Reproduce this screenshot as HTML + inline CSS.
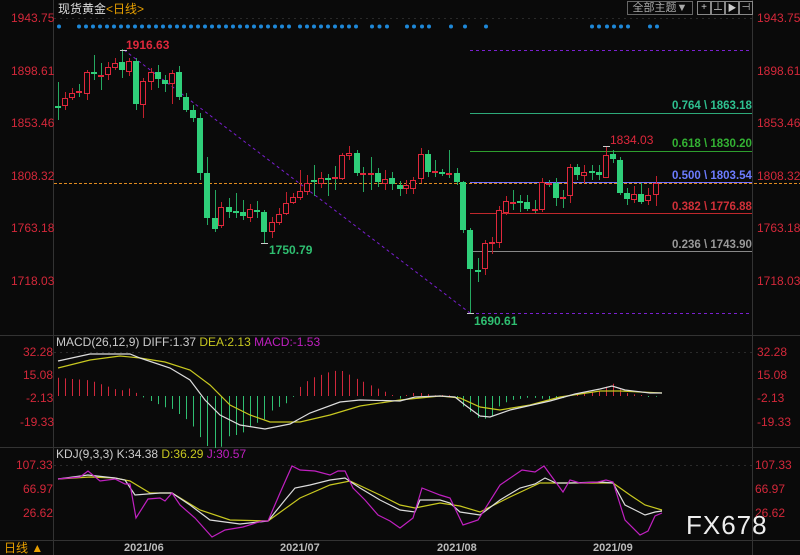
<!DOCTYPE html>
<html><head><meta charset="utf-8"><style>
html,body{margin:0;padding:0;background:#0a0a0a;}
#c{position:relative;width:800px;height:555px;overflow:hidden;background:#0a0a0a;font-family:"Liberation Sans","Noto Sans CJK SC",sans-serif;}
.t{position:absolute;white-space:nowrap;font-size:12px;line-height:12px;}
.ax{color:#d4283a;font-size:12px;}
</style></head><body><div id="c">
<svg id="s" width="800" height="555" style="position:absolute;left:0;top:0">
<line x1="53.5" y1="0" x2="53.5" y2="555" stroke="#333" />
<line x1="752.5" y1="0" x2="752.5" y2="555" stroke="#333" />
<line x1="0" y1="335.5" x2="800" y2="335.5" stroke="#333" />
<line x1="0" y1="447.5" x2="800" y2="447.5" stroke="#333" />
<line x1="0" y1="540.5" x2="800" y2="540.5" stroke="#333" />
<line x1="54" y1="18.5" x2="752" y2="18.5" stroke="#2a2a2a" stroke-dasharray="2,4"/>
<line x1="54" y1="352.5" x2="752" y2="352.5" stroke="#2a2a2a" stroke-dasharray="2,4"/>
<line x1="54" y1="465.5" x2="752" y2="465.5" stroke="#2a2a2a" stroke-dasharray="2,4"/>
<line x1="470" y1="50.5" x2="752" y2="50.5" stroke="#7a1fd0" stroke-dasharray="3,3"/>
<line x1="470" y1="113.5" x2="752" y2="113.5" stroke="#2eaa7a"/>
<line x1="470" y1="151.5" x2="752" y2="151.5" stroke="#2e9e2e"/>
<line x1="470" y1="182.5" x2="752" y2="182.5" stroke="#7070ff"/>
<line x1="470" y1="213.5" x2="752" y2="213.5" stroke="#c0282c"/>
<line x1="470" y1="251.5" x2="752" y2="251.5" stroke="#888"/>
<line x1="470" y1="313.5" x2="752" y2="313.5" stroke="#7a1fd0" stroke-dasharray="3,3"/>
<line x1="54" y1="183.5" x2="800" y2="183.5" stroke="#e08a20" stroke-dasharray="3,2"/>
<line x1="124" y1="50" x2="470" y2="313" stroke="#7a1fd0" stroke-dasharray="3,3"/>
<g id="cd"></g><g id="mc"></g><g id="dots"></g>
</svg>
<div class="t" style="left:58px;top:3px;color:#ddd;font-size:12px">现货黄金<span style="color:#e8a000">&lt;日线&gt;</span></div>
<div class="t" style="left:627px;top:1px;width:64px;height:12px;border:1px solid #666;color:#aaa;font-size:11px;text-align:center">全部主题▼</div>
<div class="t" style="left:697px;top:1px;width:12px;height:12px;border:1px solid #888;color:#ccc;font-size:10px;text-align:center">+</div>
<div class="t" style="left:711px;top:1px;width:12px;height:12px;border:1px solid #888;color:#ccc;font-size:10px;text-align:center">⊥</div>
<div class="t" style="left:725px;top:1px;width:12px;height:12px;border:1px solid #888;color:#ccc;font-size:9px;text-align:center">▶</div>
<div class="t" style="left:739px;top:1px;width:12px;height:12px;border:1px solid #888;color:#ccc;font-size:10px;text-align:center">⊣</div>
<div class="t ax" style="left:11px;top:12px">1943.75</div>
<div class="t ax" style="left:11px;top:65px">1898.61</div>
<div class="t ax" style="left:11px;top:117px">1853.46</div>
<div class="t ax" style="left:11px;top:170px">1808.32</div>
<div class="t ax" style="left:11px;top:222px">1763.18</div>
<div class="t ax" style="left:11px;top:275px">1718.03</div>
<div class="t ax" style="left:757px;top:12px">1943.75</div>
<div class="t ax" style="left:757px;top:65px">1898.61</div>
<div class="t ax" style="left:757px;top:117px">1853.46</div>
<div class="t ax" style="left:757px;top:170px">1808.32</div>
<div class="t ax" style="left:757px;top:222px">1763.18</div>
<div class="t ax" style="left:757px;top:275px">1718.03</div>
<div class="t ax" style="left:23px;top:346px">32.28</div>
<div class="t ax" style="left:23px;top:369px">15.08</div>
<div class="t ax" style="left:26px;top:392px">-2.13</div>
<div class="t ax" style="left:20px;top:416px">-19.33</div>
<div class="t ax" style="left:757px;top:346px">32.28</div>
<div class="t ax" style="left:757px;top:369px">15.08</div>
<div class="t ax" style="left:757px;top:392px">-2.13</div>
<div class="t ax" style="left:757px;top:416px">-19.33</div>
<div class="t ax" style="left:16px;top:459px">107.33</div>
<div class="t ax" style="left:23px;top:483px">66.97</div>
<div class="t ax" style="left:23px;top:507px">26.62</div>
<div class="t ax" style="left:755px;top:459px">107.33</div>
<div class="t ax" style="left:755px;top:483px">66.97</div>
<div class="t ax" style="left:755px;top:507px">26.62</div>
<div class="t" style="left:126px;top:39px;color:#e0283c;font-size:12px;font-weight:bold">1916.63</div>
<div class="t" style="left:269px;top:244px;color:#2fbf71;font-size:12px;font-weight:bold">1750.79</div>
<div class="t" style="left:610px;top:134px;color:#e0283c;font-size:12px">1834.03</div>
<div class="t" style="left:474px;top:315px;color:#2fbf71;font-size:12px;font-weight:bold">1690.61</div>
<div class="t" style="left:672px;top:100px;color:#2ec090;font-size:11.5px;font-weight:bold">0.764 \ 1863.18</div>
<div class="t" style="left:672px;top:138px;color:#33b233;font-size:11.5px;font-weight:bold">0.618 \ 1830.20</div>
<div class="t" style="left:672px;top:170px;color:#6c7cff;font-size:11.5px;font-weight:bold">0.500 \ 1803.54</div>
<div class="t" style="left:672px;top:201px;color:#d03038;font-size:11.5px;font-weight:bold">0.382 \ 1776.88</div>
<div class="t" style="left:672px;top:239px;color:#999;font-size:11.5px;font-weight:bold">0.236 \ 1743.90</div>
<div class="t" style="left:56px;top:336px;font-size:12px;color:#ccc">MACD(26,12,9) DIFF:1.37 <span style="color:#c8c820">DEA:2.13</span> <span style="color:#c020c0">MACD:-1.53</span></div>
<div class="t" style="left:56px;top:448px;font-size:12px;color:#ccc">KDJ(9,3,3) K:34.38 <span style="color:#c8c820">D:36.29</span> <span style="color:#c020c0">J:30.57</span></div>
<div class="t" style="left:4px;top:542px;color:#e8a000;font-size:12px">日线 ▲</div>
<div class="t" style="left:124px;top:542px;color:#bbb;font-size:11px;font-weight:bold">2021/06</div>
<div class="t" style="left:280px;top:542px;color:#bbb;font-size:11px;font-weight:bold">2021/07</div>
<div class="t" style="left:437px;top:542px;color:#bbb;font-size:11px;font-weight:bold">2021/08</div>
<div class="t" style="left:593px;top:542px;color:#bbb;font-size:11px;font-weight:bold">2021/09</div>
<div class="t" style="left:686px;top:512px;color:#eee;font-size:26px;line-height:26px;letter-spacing:1px">FX678</div>
<script>
var NS="http://www.w3.org/2000/svg";
function el(p,n,a){var e=document.createElementNS(NS,n);for(var k in a)e.setAttribute(k,a[k]);p.appendChild(e);return e;}
var C=[[58,106,106,82,120],[65,105,98,92,110],[72,97,93,88,100],[79,91,91,84,97],[87,93,72,70,100],[94,72,74,55,80],[101,75,75,63,90],[108,74,67,62,80],[115,67,63,58,70],[122,62,70,49,78],[129,71,61,58,76],[136,61,104,58,110],[143,104,81,78,118],[151,81,72,68,90],[158,72,79,65,88],[165,80,84,75,92],[172,83,73,70,104],[179,72,97,66,100],[186,97,110,93,112],[193,110,118,105,122],[200,118,173,113,180],[207,173,218,157,225],[215,218,229,190,232],[221,225,207,202,228],[229,207,212,198,218],[236,211,211,193,218],[243,212,216,200,220],[250,217,209,204,222],[257,210,211,201,218],[264,212,232,210,243],[272,231,222,217,238],[279,222,214,208,225],[286,213,203,192,215],[293,202,197,193,204],[300,197,191,170,200],[307,191,183,175,195],[314,180,182,165,196],[321,183,178,172,188],[328,178,178,174,196],[335,177,177,166,190],[342,178,155,153,180],[349,155,153,146,160],[357,153,173,150,176],[363,173,173,167,192],[371,173,173,157,190],[378,173,182,168,187],[385,183,179,170,190],[392,178,184,172,190],[400,185,189,181,196],[406,188,185,180,194],[413,188,180,177,194],[421,178,154,148,183],[428,154,172,150,177],[435,171,171,160,177],[442,172,172,169,176],[449,173,173,150,178],[457,173,182,168,185],[463,182,230,181,233],[470,230,269,228,313],[478,270,270,258,282],[485,268,243,240,275],[492,243,242,237,254],[499,242,210,206,248],[506,212,201,196,215],[513,202,202,190,210],[520,201,201,195,212],[527,202,209,195,211],[535,209,209,200,213],[542,209,182,178,212],[549,183,183,180,187],[556,183,198,178,206],[563,197,197,190,208],[570,195,167,164,203],[577,167,175,164,180],[584,175,172,165,183],[592,171,171,165,180],[599,172,175,165,180],[606,177,155,146,178],[613,154,159,150,163],[620,160,193,157,195],[627,193,199,188,205],[634,199,194,186,203],[641,194,202,183,204],[648,200,195,188,205],[656,194,183,176,206]];
var g=document.getElementById('cd');
C.forEach(function(c){var x=c[0],o=c[1],cl=c[2],up=cl<o;var col='#2fcf7a';
el(g,'line',{x1:x+.5,x2:x+.5,y1:c[3],y2:c[4],stroke:up?'#c0202c':'#25a860'});
var t=Math.min(o,cl),h=Math.max(1,Math.abs(o-cl));
if(up)el(g,'rect',{x:x-2.5,y:t+.5,width:5,height:h,fill:'#0a0a0a',stroke:'#e0283c'});
else el(g,'rect',{x:x-3,y:t,width:6,height:h+(h<2?1:0),fill:(cl==o&&x%2)?'#e0283c':col});});
el(g,'line',{x1:120,x2:127,y1:50.5,y2:50.5,stroke:'#ccc'});el(g,'line',{x1:261,x2:268,y1:243.5,y2:243.5,stroke:'#ccc'});
el(g,'line',{x1:603,x2:610,y1:146.5,y2:146.5,stroke:'#ccc'});el(g,'line',{x1:467,x2:474,y1:313.5,y2:313.5,stroke:'#ccc'});
var d=document.getElementById('dots');var dx=[59];for(var x=79;x<=289;x+=7)dx.push(x);for(x=300;x<=357;x+=7)dx.push(x);for(x=372;x<=392;x+=7.5)dx.push(x);
dx=dx.concat([407,414,422,429,451,465,486,592,599,607,614,621,628,650,657]);
dx.forEach(function(x){el(d,'circle',{cx:x,cy:26.5,r:2,fill:'#1e88d8'});});
function interp(P,x){for(var i=0;i<P.length-1;i++){if(x>=P[i][0]&&x<=P[i+1][0]){var t=(x-P[i][0])/(P[i+1][0]-P[i][0]);return P[i][1]+t*(P[i+1][1]-P[i][1]);}}return P[P.length-1][1];}
function pl(P,col){el(document.getElementById('mc'),'polyline',{points:P.map(function(p){return p.join(',')}).join(' '),fill:'none',stroke:col,'stroke-width':1.2});}
var DIFF=[[58,361],[90,354],[130,354],[140,358],[170,368],[190,380],[205,400],[220,415],[240,425],[265,429],[290,424],[310,413],[340,402],[360,400],[400,401],[415,397],[440,396],[455,397],[465,405],[480,416],[490,417],[510,410],[550,401],[575,394],[600,389],[612,386],[625,390],[650,393],[662,393]];
var DEA=[[58,368],[90,360],[120,356],[140,358],[165,362],[190,370],[210,385],[230,405],[250,415],[270,422],[300,422],[330,415],[360,406],[400,400],[440,396],[460,398],[480,407],[500,410],[530,405],[560,397],[600,391],[620,391],[640,392],[662,393]];
var m=document.getElementById('mc');
C.forEach(function(c){var x=c[0];var v=(interp(DEA,x)-interp(DIFF,x))*2.6;if(Math.abs(v)<0.5)v=v<0?-1:1;
el(m,'line',{x1:x+.5,x2:x+.5,y1:396,y2:396-v,stroke:v>0?'#d0283c':'#2fbf71'});});
pl(DEA,'#c8c820');pl(DIFF,'#ddd');
pl([[58,479],[90,477],[115,478],[130,481],[150,493],[172,493],[200,510],[230,520],[268,521],[300,498],[330,485],[350,481],[380,495],[400,505],[415,508],[440,503],[460,506],[480,512],[510,497],[540,483],[560,483],[600,483],[613,483],[630,495],[645,505],[662,510]],'#c8c820');
pl([[58,479],[88,475],[115,478],[125,480],[135,495],[160,493],[172,493],[190,505],[210,520],[240,524],[268,521],[285,500],[295,488],[310,485],[330,480],[345,478],[360,488],[380,500],[400,510],[415,512],[420,500],[440,500],[450,503],[460,512],[480,515],[500,500],[520,488],[535,484],[545,478],[556,483],[570,483],[600,482],[613,483],[625,505],[645,515],[655,512],[662,511]],'#ddd');
pl([[58,479],[80,477],[88,471],[100,481],[115,479],[125,484],[130,484],[136,518],[148,499],[160,498],[165,501],[172,493],[180,505],[195,518],[212,537],[225,530],[243,527],[262,521],[268,521],[280,493],[292,466],[300,470],[315,471],[330,475],[338,471],[345,471],[353,488],[365,500],[378,515],[390,521],[400,528],[413,518],[422,488],[440,495],[450,498],[463,525],[478,520],[500,485],[522,470],[535,472],[544,466],[552,477],[563,492],[570,480],[580,483],[598,482],[606,480],[613,482],[625,520],[640,535],[648,531],[655,516],[662,513]],'#c020c0');
</script>
</div></body></html>
